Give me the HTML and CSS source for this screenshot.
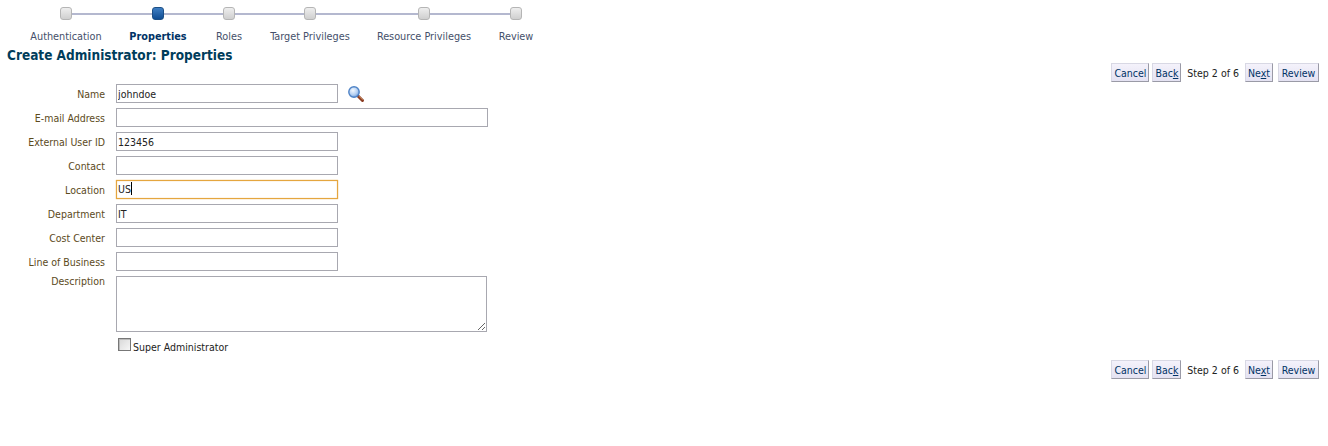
FILE: index.html
```html
<!DOCTYPE html>
<html lang="en">
<head>
<meta charset="utf-8">
<title>Create Administrator: Properties</title>
<link rel="stylesheet" href="styles.css">
</head>
<body>
<nav class="train">
  <div class="step"><span class="node"></span><span class="step-label">Authentication</span></div>
  <div class="step current"><span class="node"></span><span class="step-label">Properties</span></div>
  <div class="step"><span class="node"></span><span class="step-label">Roles</span></div>
  <div class="step"><span class="node"></span><span class="step-label">Target Privileges</span></div>
  <div class="step"><span class="node"></span><span class="step-label">Resource Privileges</span></div>
  <div class="step"><span class="node"></span><span class="step-label">Review</span></div>
</nav>
<h1 class="title">Create Administrator: Properties</h1>
<div class="actions">
  <button class="btn" type="button">Cancel</button>
  <button class="btn" type="button">Bac<u>k</u></button>
  <span class="step-count">Step 2 of 6</span>
  <button class="btn btn-next" type="button">Ne<u>x</u>t</button>
  <button class="btn btn-review" type="button">Review</button>
</div>
<form class="form">
  <label class="lbl">Name</label>
  <div class="field"><input class="input" type="text" value="johndoe">
    <svg class="search" width="18" height="18" viewBox="0 0 18 18" aria-hidden="true">
      <defs><radialGradient id="lens" cx="0.4" cy="0.35" r="0.7"><stop offset="0" stop-color="#f2f8ff"/><stop offset="0.6" stop-color="#b5d0f2"/><stop offset="1" stop-color="#6a9bdc"/></radialGradient></defs>
      <path d="M10.5 10.5 L15.5 15.5" stroke="#8a3b22" stroke-width="3" stroke-linecap="round"/>
      <path d="M12 11.2 L15.6 14.8" stroke="#d0905f" stroke-width="1"/>
      <circle cx="7" cy="7" r="5.2" fill="url(#lens)" stroke="#4f83c6" stroke-width="1.4"/>
    </svg>
  </div>
  <label class="lbl">E-mail Address</label>
  <div class="field"><input class="input wide" type="text"></div>
  <label class="lbl">External User ID</label>
  <div class="field"><input class="input" type="text" value="123456"></div>
  <label class="lbl">Contact</label>
  <div class="field"><input class="input" type="text"></div>
  <label class="lbl">Location</label>
  <div class="field"><div class="input focused">US<span class="caret"></span></div></div>
  <label class="lbl">Department</label>
  <div class="field"><input class="input" type="text" value="IT"></div>
  <label class="lbl">Cost Center</label>
  <div class="field"><input class="input" type="text"></div>
  <label class="lbl">Line of Business</label>
  <div class="field"><input class="input" type="text"></div>
  <label class="lbl lbl-top">Description</label>
  <div class="field"><textarea class="area"></textarea></div>
  <span></span>
  <div class="check-row"><span class="check"></span><span class="check-label">Super Administrator</span></div>
</form>
<div class="actions actions-bottom">
  <button class="btn" type="button">Cancel</button>
  <button class="btn" type="button">Bac<u>k</u></button>
  <span class="step-count">Step 2 of 6</span>
  <button class="btn btn-next" type="button">Ne<u>x</u>t</button>
  <button class="btn btn-review" type="button">Review</button>
</div>
</body>
</html>
```
FILE: styles.css
```css
* { box-sizing: border-box; }
html, body { margin: 0; padding: 0; }
body {
  background: #fff;
  font-family: "DejaVu Sans", Tahoma, sans-serif;
  font-stretch: condensed;
  font-size: 10.5px;
  color: #333;
  height: 446px;
  overflow: hidden;
}
.train {
  display: grid;
  grid-template-columns: 92px 92px 50px 112px 116px 68px;
  width: max-content;
  padding: 7px 0 0 20px;
}
.step {
  position: relative;
  display: flex;
  flex-direction: column;
  align-items: center;
}
.step::before, .step::after {
  content: "";
  position: absolute;
  top: 6px;
  height: 2px;
  width: 50%;
  background: #b4b8cf;
}
.step::before { left: 0; }
.step::after { right: 0; }
.step:first-child::before, .step:last-child::after { display: none; }
.node {
  position: relative;
  z-index: 1;
  width: 12px;
  height: 13px;
  border: 1px solid #b5b5b5;
  border-radius: 3px;
  background: linear-gradient(#eeeeee, #cfcfcf);
}
.current .node {
  background: linear-gradient(#3f7fc4, #0f4c92);
  border-color: #1c4f86;
}
.step-label {
  margin-top: 10px;
  font-size: 10.8px;
  line-height: 14px;
  color: #45506a;
  white-space: nowrap;
}
.current .step-label { font-weight: bold; color: #003366; }
.title {
  margin: 3px 0 0 7px;
  font-size: 13.5px;
  line-height: 16px;
  font-weight: bold;
  color: #003d5b;
}
.actions {
  display: flex;
  justify-content: flex-end;
  align-items: center;
  gap: 3px;
  padding-right: 9px;
  height: 19px;
}
.actions-bottom { margin-top: 7px; }
.btn {
  height: 19px;
  padding: 0 2px;
  font: inherit;
  color: #003366;
  background: linear-gradient(#f4f2fb, #e4e2f2);
  border: 1px solid;
  border-color: #d8d8e4 #9a9aa6 #9a9aa6 #d8d8e4;
  border-radius: 0;
}
.btn-next { margin-right: 2px; }
.btn-review { min-width: 41px; }
.step-count { margin: 0 3px; color: #222; }
.form {
  display: grid;
  grid-template-columns: 105px 1fr;
  column-gap: 11px;
  row-gap: 5px;
  margin-top: 2px;
  align-items: center;
}
.lbl { text-align: right; color: #5c4a1c; white-space: nowrap; }
.lbl-top { align-self: start; margin-top: -1px; }
.field { display: flex; align-items: center; }
.input {
  display: block;
  width: 222px;
  height: 19px;
  margin: 0;
  padding: 0 1px;
  font: inherit;
  line-height: 17px;
  color: #222;
  background: #fff;
  border: 1px solid #a8a8b0;
  border-radius: 0;
  outline: none;
}
.wide { width: 372px; }
.focused { border-color: #e5a63f; box-shadow: 0 0 1px #e5a63f, inset 0 0 1px #e5a63f; }
.caret { display: inline-block; width: 1px; height: 13px; background: #000; vertical-align: -2px; }
.search { margin-left: 9px; }
.area {
  display: block;
  width: 371px;
  height: 56px;
  margin: 0;
  border: 1px solid #a8a8b0;
  border-radius: 0;
  outline: none;
  background: #fff;
}
.check-row { display: flex; align-items: flex-start; padding-left: 2px; margin-top: 1px; }
.check {
  width: 13px;
  height: 13px;
  border: 1px solid #777;
  box-shadow: inset 1px 1px 0 #bbb;
  background: linear-gradient(135deg, #d8d8d8, #f6f6f6);
}
.check-label { margin-left: 2px; margin-top: 3px; color: #222; }
```
